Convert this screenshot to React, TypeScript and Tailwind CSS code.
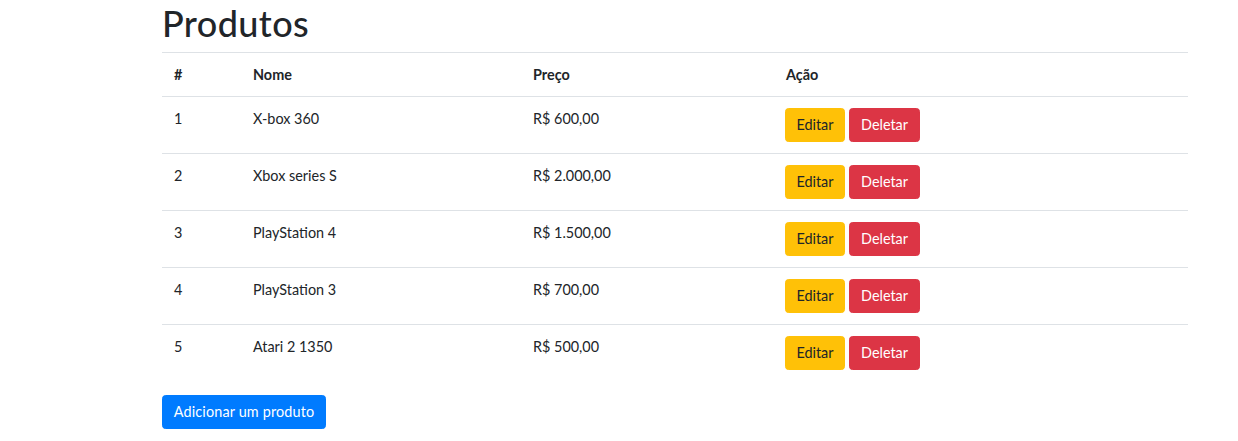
import React from "react"

interface Produto {
  id: number
  nome: string
  preco: string
}

const produtos: Produto[] = [
  { id: 1, nome: "X-box 360", preco: "R$ 600,00" },
  { id: 2, nome: "Xbox series S", preco: "R$ 2.000,00" },
  { id: 3, nome: "PlayStation 4", preco: "R$ 1.500,00" },
  { id: 4, nome: "PlayStation 3", preco: "R$ 700,00" },
  { id: 5, nome: "Atari 2 1350", preco: "R$ 500,00" },
]

export default function App() {
  return (
    <div className="min-h-screen bg-white text-[#212529] text-[14.4px] leading-[21.6px] font-['Lato','Noto_Sans',sans-serif]">
      <div className="ml-[162px] w-[1026px] pt-[1.6px]">
        <h1 className="text-[36px] leading-[43.2px] mb-[7.2px] font-medium tracking-[0.4px]">Produtos</h1>

        <table className="w-full border-collapse mb-[13.4px]">
          <colgroup>
            <col className="w-[79px]" />
            <col className="w-[280px]" />
            <col className="w-[253px]" />
            <col />
          </colgroup>
          <thead>
            <tr className="h-[44px]">
              <th className="text-left align-top font-bold px-[12px] py-[10.8px] border-t border-b border-[#dee2e6]">#</th>
              <th className="text-left align-top font-bold px-[12px] py-[10.8px] border-t border-b border-[#dee2e6]">Nome</th>
              <th className="text-left align-top font-bold px-[12px] py-[10.8px] border-t border-b border-[#dee2e6]">Preço</th>
              <th className="text-left align-top font-bold px-[12px] py-[10.8px] border-t border-b border-[#dee2e6]">Ação</th>
            </tr>
          </thead>
          <tbody>
            {produtos.map((p, i) => (
              <tr key={p.id} className="h-[57px]">
                <td className={`align-top px-[12px] py-[10.8px] ${i > 0 ? "border-t border-[#dee2e6]" : ""}`}>{p.id}</td>
                <td className={`align-top px-[12px] py-[10.8px] ${i > 0 ? "border-t border-[#dee2e6]" : ""}`}>{p.nome}</td>
                <td className={`align-top px-[12px] py-[10.8px] ${i > 0 ? "border-t border-[#dee2e6]" : ""}`}>{p.preco}</td>
                <td className={`align-top pl-[10.6px] pr-[12px] py-[10.8px] ${i > 0 ? "border-t border-[#dee2e6]" : ""}`}>
                  <div className="flex gap-[4px]">
                    <button className="bg-[#ffc107] border border-[#ffc107] text-[#212529] rounded-[3.6px] px-[10.8px] py-[5.4px] leading-[21.6px]">
                      Editar
                    </button>
                    <button className="bg-[#dc3545] border border-[#dc3545] text-white rounded-[3.6px] px-[10.8px] py-[5.4px] leading-[21.6px]">
                      Deletar
                    </button>
                  </div>
                </td>
              </tr>
            ))}
          </tbody>
        </table>

        <button className="bg-[#007bff] border border-[#007bff] text-white rounded-[3.6px] px-[10.8px] py-[5.4px] leading-[21.6px] tracking-[0.15px]">
          Adicionar um produto
        </button>
      </div>
    </div>
  )
}
